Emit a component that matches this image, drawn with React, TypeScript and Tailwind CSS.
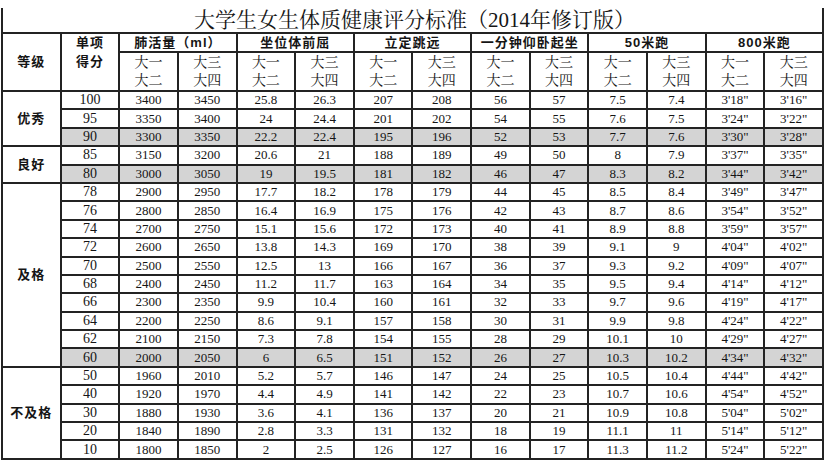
import React from "react";

type Row = (string | number)[];

const rows: Row[] = [
    [100, 3400, 3450, 25.8, 26.3, 207, 208, 56, 57, 7.5, 7.4, `3'18"`, `3'16"`],
    [95, 3350, 3400, 24, 24.4, 201, 202, 54, 55, 7.6, 7.5, `3'24"`, `3'22"`],
    [90, 3300, 3350, 22.2, 22.4, 195, 196, 52, 53, 7.7, 7.6, `3'30"`, `3'28"`],
    [85, 3150, 3200, 20.6, 21, 188, 189, 49, 50, 8, 7.9, `3'37"`, `3'35"`],
    [80, 3000, 3050, 19, 19.5, 181, 182, 46, 47, 8.3, 8.2, `3'44"`, `3'42"`],
    [78, 2900, 2950, 17.7, 18.2, 178, 179, 44, 45, 8.5, 8.4, `3'49"`, `3'47"`],
    [76, 2800, 2850, 16.4, 16.9, 175, 176, 42, 43, 8.7, 8.6, `3'54"`, `3'52"`],
    [74, 2700, 2750, 15.1, 15.6, 172, 173, 40, 41, 8.9, 8.8, `3'59"`, `3'57"`],
    [72, 2600, 2650, 13.8, 14.3, 169, 170, 38, 39, 9.1, 9, `4'04"`, `4'02"`],
    [70, 2500, 2550, 12.5, 13, 166, 167, 36, 37, 9.3, 9.2, `4'09"`, `4'07"`],
    [68, 2400, 2450, 11.2, 11.7, 163, 164, 34, 35, 9.5, 9.4, `4'14"`, `4'12"`],
    [66, 2300, 2350, 9.9, 10.4, 160, 161, 32, 33, 9.7, 9.6, `4'19"`, `4'17"`],
    [64, 2200, 2250, 8.6, 9.1, 157, 158, 30, 31, 9.9, 9.8, `4'24"`, `4'22"`],
    [62, 2100, 2150, 7.3, 7.8, 154, 155, 28, 29, 10.1, 10, `4'29"`, `4'27"`],
    [60, 2000, 2050, 6, 6.5, 151, 152, 26, 27, 10.3, 10.2, `4'34"`, `4'32"`],
    [50, 1960, 2010, 5.2, 5.7, 146, 147, 24, 25, 10.5, 10.4, `4'44"`, `4'42"`],
    [40, 1920, 1970, 4.4, 4.9, 141, 142, 22, 23, 10.7, 10.6, `4'54"`, `4'52"`],
    [30, 1880, 1930, 3.6, 4.1, 136, 137, 20, 21, 10.9, 10.8, `5'04"`, `5'02"`],
    [20, 1840, 1890, 2.8, 3.3, 131, 132, 18, 19, 11.1, 11, `5'14"`, `5'12"`],
    [10, 1800, 1850, 2, 2.5, 126, 127, 16, 17, 11.3, 11.2, `5'24"`, `5'22"`],
];

// grade label starts at row index, spans n rows
const grades: Record<number, { label: string; span: number }> = {
    0: { label: "优秀", span: 3 },
    3: { label: "良好", span: 2 },
    5: { label: "及格", span: 10 },
    15: { label: "不及格", span: 5 },
};

const grayScores = [90, 80, 60];

const groups = ["肺活量（ml）", "坐位体前屈", "立定跳远", "一分钟仰卧起坐", "50米跑", "800米跑"];

const cell = "border-2 border-[#232323] p-0 text-center align-middle";
const serif = { fontFamily: '"Liberation Serif", "Noto Serif CJK SC", "Noto Sans CJK SC", serif' };
const bold = { fontFamily: '"Liberation Sans", "Noto Sans CJK SC", sans-serif' };

export default function App() {
    return (
        <div className="w-[828px] h-[466px] bg-white pt-[8px] pl-[1px] text-[#151515]" style={serif}>
            <div className="w-[823px] h-[24px] border-x-2 border-[#232323] flex items-end justify-center pb-[1px]">
                <span className="text-[21px] leading-none pl-[4px]">大学生女生体质健康评分标准（2014年修订版）</span>
            </div>
            <table className="w-[823px] table-fixed border-collapse">
                <thead>
                    <tr className="h-[19px]">
                        <th rowSpan={3} className={`${cell} text-[13px] font-bold tracking-[1px]`} style={bold}>
                            等级
                        </th>
                        <th rowSpan={3} className={`${cell} !align-top text-[13px] font-bold tracking-[1px]`} style={bold}>
                            <div className="h-[18px] leading-[18px]">单项</div>
                            <div className="h-[19px] leading-[19px]">得分</div>
                        </th>
                        {groups.map((g) => (
                            <th key={g} colSpan={2} className={`${cell} text-[13px] font-bold tracking-[1px] leading-[16px]`} style={bold}>
                                {g}
                            </th>
                        ))}
                    </tr>
                    <tr className="h-[19px]">
                        {groups.map((g) => (
                            <React.Fragment key={g}>
                                <th rowSpan={2} className={`${cell} text-[14px] font-normal`}>
                                    <div className="h-[19px] leading-[19px]">大一</div>
                                    <div className="h-[18px] leading-[18px]">大二</div>
                                </th>
                                <th rowSpan={2} className={`${cell} text-[14px] font-normal`}>
                                    <div className="h-[19px] leading-[19px]">大三</div>
                                    <div className="h-[18px] leading-[18px]">大四</div>
                                </th>
                            </React.Fragment>
                        ))}
                    </tr>
                    <tr className="h-[19px]" />
                </thead>
                <tbody>
                    {rows.map((r, i) => {
                        const gray = grayScores.includes(r[0] as number);
                        const g = grades[i];
                        return (
                            <tr key={i} className="h-[18.4px]">
                                {g && (
                                    <td rowSpan={g.span} className={`${cell} text-[13px] font-bold tracking-[1px] bg-white`} style={bold}>
                                        {g.label}
                                    </td>
                                )}
                                {r.map((v, j) => (
                                    <td
                                        key={j}
                                        className={`${cell} leading-[14px] ${j === 0 ? "text-[14px]" : "text-[13px]"} ${gray ? "bg-[#d4d4d4]" : ""}`}
                                    >
                                        {v}
                                    </td>
                                ))}
                            </tr>
                        );
                    })}
                </tbody>
            </table>
        </div>
    );
}
